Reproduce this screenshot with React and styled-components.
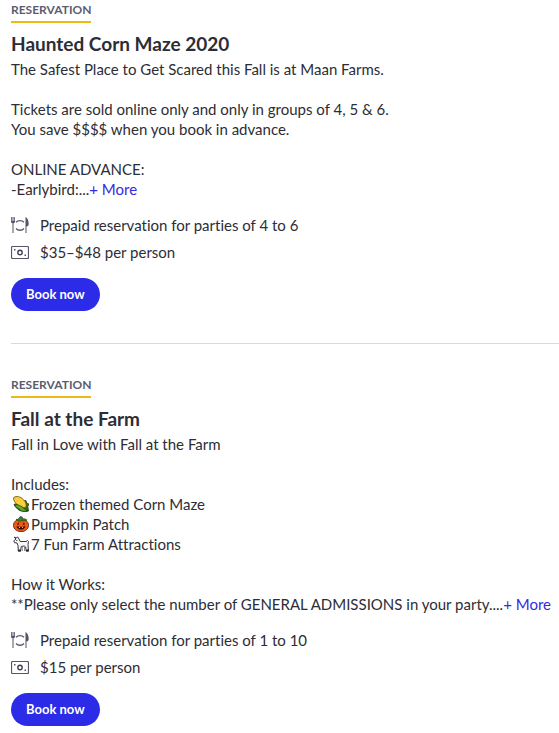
import React from "react";
import styled, { createGlobalStyle } from "styled-components";

const experiences = [
  {
    title: "Haunted Corn Maze 2020",
    lines: [
      { text: "The Safest Place to Get Scared this Fall is at Maan Farms." },
      { text: "" },
      { text: "Tickets are sold online only and only in groups of 4, 5 & 6." },
      { text: "You save $$$$ when you book in advance." },
      { text: "" },
      { text: "ONLINE ADVANCE:" },
      { text: "-Earlybird:...", more: true },
    ],
    party: "Prepaid reservation for parties of 4 to 6",
    price: "$35–$48 per person",
  },
  {
    title: "Fall at the Farm",
    lines: [
      { text: "Fall in Love with Fall at the Farm" },
      { text: "" },
      { text: "Includes:" },
      { icon: "corn", text: "Frozen themed Corn Maze" },
      { icon: "pumpkin", text: "Pumpkin Patch" },
      { icon: "goat", text: "7 Fun Farm Attractions" },
      { text: "" },
      { text: "How it Works:" },
      {
        text: "**Please only select the number of GENERAL ADMISSIONS in your party....",
        more: true,
      },
    ],
    party: "Prepaid reservation for parties of 1 to 10",
    price: "$15 per person",
  },
];

const CornIcon = () => (
  <svg viewBox="0 0 16 16" aria-hidden="true">
    <path d="M10 5.500l3-1 .5 2.500 2.300 1-1 2.500.7 4.500-4 .5-5-1-4-3.500-1.500-2.500z" fill="#2f6f1d" stroke="#18390f" strokeWidth=".8" />
    <path d="M.8 1.500C3.500-.4 7.500.5 10.500 3.700c2.700 2.500 3.200 5.500 2.400 7.500-2.200 1.300-5.500.4-8.400-2.200C1.500 6-.2 3.300.8 1.500z" fill="#ffc928" stroke="#6b4a08" strokeWidth=".8" />
    <path d="M3 2.500l8 7M5.500 2l6 6M2.500 5l6 5" stroke="#fff0a0" strokeWidth=".8" strokeDasharray="1 1" fill="none" />
    <path d="M1.500 9c3-1 7 .8 9.500 3.500l3.500 2.500c-3 1-6 .5-8-1.500C5 12 2.500 11.500 1.500 9z" fill="#63a830" stroke="#18390f" strokeWidth=".7" />
  </svg>
);

const PumpkinIcon = () => (
  <svg viewBox="0 0 16 16" aria-hidden="true">
    <ellipse cx="8" cy="9.300" rx="7.600" ry="6.400" fill="#f05a14" stroke="#5a1c08" strokeWidth=".8" />
    <path d="M8 4C4 5 4 13 8 15M8 4c4 1 4 9 0 11" stroke="#c43c0d" strokeWidth=".6" fill="none" />
    <path d="M3 3.500C5 3.500 6 3 7 .6l2.500.5L9 3c2-.5 4 0 5 1.200-2 .8-3.500.3-5 .3-2 1.500-4 .5-6-1z" fill="#3b8529" stroke="#17420f" strokeWidth=".6" />
    <path d="M4 8.500l1-2 1.500 2zM9.500 8.500l1.500-2 1 2zM3.500 10l2 .8h5l2-.8c-.3 2.200-2 3.500-4.500 3.500S3.800 12.200 3.500 10z" fill="#35100a" />
    <path d="M6 11h1v1H6zM9 11h1v1H9z" fill="#ffb52b" />
  </svg>
);

const GoatIcon = () => (
  <svg viewBox="0 0 16 16" aria-hidden="true">
    <path d="M.8 4.800 3 3 1.200 1.200 3.500 2 4.500.8 6 3l1.200 2.500H13l1.500-1 1 1-.5 3 .5 6.700h-2.300L12.700 11l-1.500-1-3 .5-.5 4.700H5.300L5 9.500 4 7l-2.500-.3z" fill="#f7f6f8" stroke="#222027" strokeWidth=".9" strokeLinejoin="round" />
    <path d="M5.300 13.500h2.400v1.700H5.300zM13.200 13.500h2.300v1.700h-2.300z" fill="#222027" />
    <path d="M3.300 4h1v1h-1z" fill="#222027" />
    <path d="M9.300 10.500V15M11.500 10.500V15" stroke="#8a8791" strokeWidth="1" />
  </svg>
);

const lineIcons = { corn: CornIcon, pumpkin: PumpkinIcon, goat: GoatIcon };

const DiningIcon = () => (
  <svg viewBox="0 0 18 18" aria-hidden="true">
    <path d="M0 1v4.500C0 6.500.7 7 1.500 7.200V17h1V7.200C3.400 7 4 6.500 4 5.500V1h-.8v4h-.7V1h-1v4H.8V1z" fill="#55546a" />
    <path d="M14.500 1c2 .8 3.200 3.500 3.200 7 0 1.500-.8 2.400-2.200 2.500V17h-1z" fill="#55546a" />
    <path d="M5 6.200C7 4 11 4 13 6.200M5 12.500c2 2.300 6 2.300 8 0" fill="none" stroke="#55546a" strokeWidth="1.300" />
  </svg>
);

const CashIcon = () => (
  <svg viewBox="0 0 18 18" aria-hidden="true">
    <rect x=".5" y="3.500" width="17" height="12" rx="1" fill="none" stroke="#55546a" strokeWidth="1.200" />
    <circle cx="9" cy="9.500" r="2.200" fill="none" stroke="#403f56" strokeWidth="1.400" />
    <path d="M3 6h1.500v1.500H3zM13.500 11.500H15V13h-1.500z" fill="#55546a" />
  </svg>
);

const DescriptionLine = ({ line }) => {
  const Icon = lineIcons[line.icon];
  return (
    <Line>
      {Icon && (
        <Emoji>
          <Icon />
        </Emoji>
      )}
      {line.text}
      {line.more && <MoreLink href="#more">+ More</MoreLink>}
    </Line>
  );
};

const Experience = ({ item }) => (
  <Card>
    <Label>RESERVATION</Label>
    <Title>{item.title}</Title>
    <Description>
      {item.lines.map((line, i) => (
        <DescriptionLine key={i} line={line} />
      ))}
    </Description>
    <Details>
      <Detail>
        <DiningIcon />
        {item.party}
      </Detail>
      <Detail>
        <CashIcon />
        {item.price}
      </Detail>
    </Details>
    <BookButton type="button">Book now</BookButton>
  </Card>
);

const App = () => (
  <>
    <GlobalStyle />
    <Page>
      {experiences.map((item) => (
        <Experience key={item.title} item={item} />
      ))}
    </Page>
  </>
);

const GlobalStyle = createGlobalStyle`
  body {
    margin: 0;
    background: #fff;
    color: #2d2d35;
    font-family: Lato, "Liberation Sans", sans-serif;
    font-size: 15px;
    font-variant-ligatures: none;
    line-height: 20px;
  }
`;

const Page = styled.main`
  padding: 2px 0 0 11px;
`;

const Card = styled.section`
  display: flex;
  flex-direction: column;
  align-items: flex-start;

  & + & {
    margin-top: 32px;
    padding-top: 33px;
    border-top: 1px solid #d8d9db;
  }
`;

const Label = styled.div`
  padding-bottom: 3px;
  border-bottom: 2px solid #efb815;
  color: #5c5c70;
  font-size: 12px;
  font-weight: 700;
  line-height: 16px;
`;

const Title = styled.h2`
  margin: 9px 0 3px;
  font-size: 19px;
  font-weight: 700;
  line-height: 24px;
`;

const Description = styled.div`
  width: 100%;
`;

const Line = styled.p`
  display: flex;
  align-items: center;
  min-height: 20px;
  margin: 0;
  white-space: pre-wrap;
`;

const Emoji = styled.span`
  display: flex;
  flex: none;
  width: 16px;
  margin: 0 2px;

  svg {
    width: 16px;
    height: 16px;
  }
`;

const MoreLink = styled.a`
  flex: none;
  color: #3829e0;
  text-decoration: none;
`;

const Details = styled.ul`
  display: flex;
  flex-direction: column;
  gap: 7px;
  margin: 16px 0;
  padding: 0;
  list-style: none;
`;

const Detail = styled.li`
  display: flex;
  align-items: center;
  gap: 11px;

  svg {
    flex: none;
    width: 18px;
    height: 18px;
  }
`;

const BookButton = styled.button`
  padding: 6px 15px 7px;
  border: none;
  border-radius: 17px;
  background: #2b2be8;
  color: #fff;
  font-family: inherit;
  font-size: 13px;
  font-weight: 700;
  line-height: 20px;
  cursor: pointer;
`;

export default App;
